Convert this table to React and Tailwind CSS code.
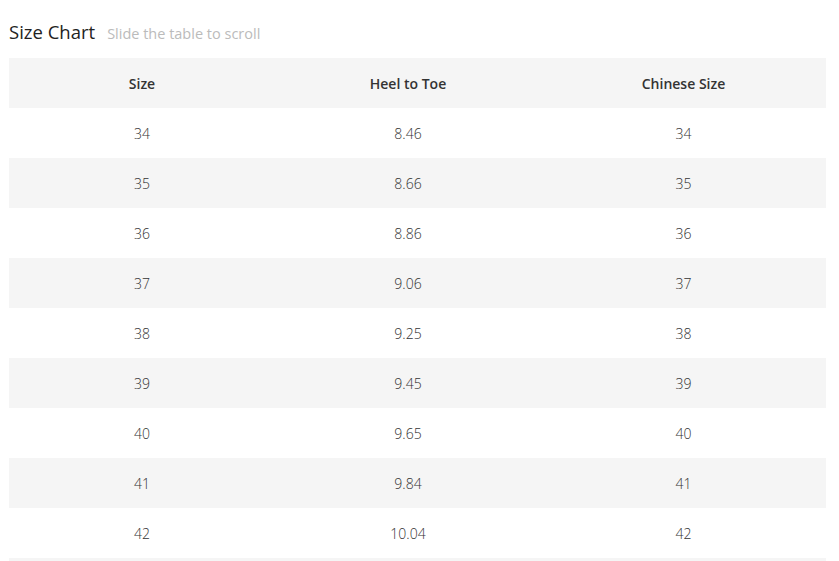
const rows = [
  ['34', '8.46', '34'],
  ['35', '8.66', '35'],
  ['36', '8.86', '36'],
  ['37', '9.06', '37'],
  ['38', '9.25', '38'],
  ['39', '9.45', '39'],
  ['40', '9.65', '40'],
  ['41', '9.84', '41'],
  ['42', '10.04', '42'],
]

export default function App() {
  return (
    <div
      className="h-[561px] w-[839px] overflow-hidden bg-white pl-[9px] pr-[13px] pt-[19px]"
      style={{ fontFamily: '"Open Sans", "Noto Sans", sans-serif' }}
    >
      <div className="mb-[14px] flex h-[25px] items-baseline gap-3">
        <h2 className="text-[18.5px] font-medium leading-[25px] text-[#222]">Size Chart</h2>
        <span className="text-[14.5px] text-[#bbbbbb]">Slide the table to scroll</span>
      </div>

      <div className="grid grid-cols-[266px_266px_1fr] bg-[#f5f5f5] text-[14px] font-semibold text-[#333]">
        <div className="flex h-[50px] items-center justify-center">Size</div>
        <div className="flex h-[50px] items-center justify-center">Heel to Toe</div>
        <div className="flex h-[50px] items-center justify-center">Chinese Size</div>
      </div>

      {rows.map((r, i) => (
        <div
          key={r[0]}
          className={
            'grid grid-cols-[266px_266px_1fr] text-[14px] font-light text-[#333] ' +
            (i % 2 === 1 ? 'bg-[#f5f5f5]' : 'bg-white')
          }
        >
          {r.map((c, j) => (
            <div key={j} className="flex h-[50px] items-center justify-center">
              {c}
            </div>
          ))}
        </div>
      ))}
      <div className="h-[50px] bg-[#f5f5f5]" />
    </div>
  )
}
